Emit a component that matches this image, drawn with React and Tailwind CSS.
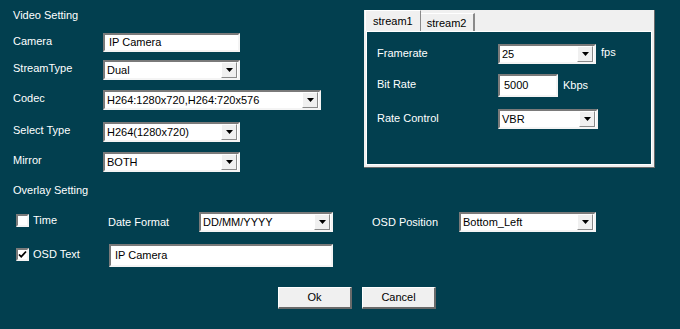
import React from "react";

function Caret() {
  return (
    <svg width="7" height="4" viewBox="0 0 7 4" className="block">
      <path d="M0 0h7L3.5 4z" fill="#000" />
    </svg>
  );
}

function Select({ value, width }) {
  return (
    <div
      className={`flex h-[20px] items-center border-2 border-t-[#7a7a7a] border-l-[#7a7a7a] border-b-[#f4f4f4] border-r-[#f4f4f4] bg-white ${width}`}
    >
      <span className="flex-1 truncate pl-[2px] text-black leading-none">{value}</span>
      <div className="mr-[1px] flex h-[16px] w-[16px] items-center justify-center border border-t-white border-l-white border-b-[#8a8a8a] border-r-[#8a8a8a] bg-[#f0f0f0]">
        <Caret />
      </div>
    </div>
  );
}

function TextBox({ value, width, height = "h-[20px]" }) {
  return (
    <div
      className={`flex items-center border-2 border-t-[#7a7a7a] border-l-[#7a7a7a] border-b-[#f4f4f4] border-r-[#f4f4f4] bg-white pl-[4px] text-black leading-none ${width} ${height}`}
    >
      {value}
    </div>
  );
}

function CheckBox({ checked }) {
  return (
    <div className="flex h-[13px] w-[13px] items-center justify-center border-2 border-t-[#7a7a7a] border-l-[#7a7a7a] border-b-[#f4f4f4] border-r-[#f4f4f4] bg-white">
      {checked && (
        <svg width="9" height="9" viewBox="0 0 9 9">
          <path d="M1 4.5l2.2 2.3L8 1.5" stroke="#000" strokeWidth="1.8" fill="none" />
        </svg>
      )}
    </div>
  );
}

function Row({ label, children, className = "" }) {
  return (
    <div className={`flex items-center ${className}`}>
      <span className="w-[90px] -mt-[3px]">{label}</span>
      {children}
    </div>
  );
}

function Button({ children }) {
  return (
    <button className="h-[22px] w-[74px] border border-t-white border-l-white border-b-2 border-r-2 border-b-[#6a6a6a] border-r-[#6a6a6a] bg-[#f0f0f0] text-black">
      {children}
    </button>
  );
}

export default function App() {
  return (
    <div
      className="h-[329px] w-[680px] overflow-hidden bg-[#023f4f] text-[11px] text-white"
      style={{ fontFamily: '"Liberation Sans", Arial, sans-serif' }}
    >
      <div className="flex">
        {/* Video settings */}
        <div className="w-[351px] pl-[13px] pt-[6px]">
          <div className="h-[18px] leading-[18px]">Video Setting</div>
          <Row label="Camera" className="mt-[9px]">
            <TextBox value="IP Camera" width="w-[137px]" height="h-[19px]" />
          </Row>
          <Row label="StreamType" className="mt-[8px]">
            <Select value="Dual" width="w-[137px]" />
          </Row>
          <Row label="Codec" className="mt-[10px]">
            <Select value="H264:1280x720,H264:720x576" width="w-[218px]" />
          </Row>
          <Row label="Select Type" className="mt-[12px]">
            <Select value="H264(1280x720)" width="w-[137px]" />
          </Row>
          <Row label="Mirror" className="mt-[10px]">
            <Select value="BOTH" width="w-[137px]" />
          </Row>
        </div>

        {/* Stream tabs */}
        <div className="mt-[10px] ml-[13px] flex h-[158px] w-[291px] flex-col border-r border-b border-r-[#6a6a6a] border-b-[#6a6a6a] bg-[#f0f0f0]">
          <div className="flex h-[21px] items-end pl-[1px] text-black">
            <div className="flex h-[21px] items-center border-l border-t border-r border-l-white border-t-white border-r-[#8a8a8a] px-[7px]">
              stream1
            </div>
            <div className="flex h-[18px] items-center border-t border-r-2 border-t-white border-r-[#8a8a8a] px-[6px] pt-[1px]">
              stream2
            </div>
          </div>
          <div className="mx-[2px] mb-[2px] flex-1 border border-white bg-[#023f4f] pl-[10px] pt-[12px]">
            <div className="flex items-center">
              <span className="w-[121px] -mt-[2px]">Framerate</span>
              <Select value="25" width="w-[98px]" />
              <span className="ml-[5px] -mt-[3px]">fps</span>
            </div>
            <div className="mt-[10px] flex items-center">
              <span className="w-[121px] -mt-[2px]">Bit Rate</span>
              <TextBox value="5000" width="w-[60px]" height="h-[23px]" />
              <span className="ml-[5px]">Kbps</span>
            </div>
            <div className="mt-[12px] flex items-center">
              <span className="w-[121px] -mt-[2px]">Rate Control</span>
              <Select value="VBR" width="w-[100px]" />
            </div>
          </div>
        </div>
      </div>

      {/* Overlay settings */}
      <div className="pl-[13px]">
        <div className="mt-[9px] h-[18px] leading-[18px]">Overlay Setting</div>
        <div className="mt-[13px] flex items-center">
          <div className="ml-[3px] -mt-[4px] flex w-[92px] items-center gap-[4px]">
            <CheckBox />
            <span>Time</span>
          </div>
          <span className="w-[91px]">Date Format</span>
          <Select value="DD/MM/YYYY" width="w-[134px]" />
          <span className="ml-[39px] w-[87px]">OSD Position</span>
          <Select value="Bottom_Left" width="w-[137px]" />
        </div>
        <div className="mt-[12px] flex items-center">
          <div className="ml-[3px] -mt-[2px] flex w-[93px] items-center gap-[4px]">
            <CheckBox checked />
            <span>OSD Text</span>
          </div>
          <TextBox value="IP Camera" width="w-[224px]" height="h-[23px]" />
        </div>
      </div>

      <div className="mt-[20px] flex justify-center gap-[10px] pl-[34px]">
        <Button>Ok</Button>
        <Button>Cancel</Button>
      </div>
    </div>
  );
}
